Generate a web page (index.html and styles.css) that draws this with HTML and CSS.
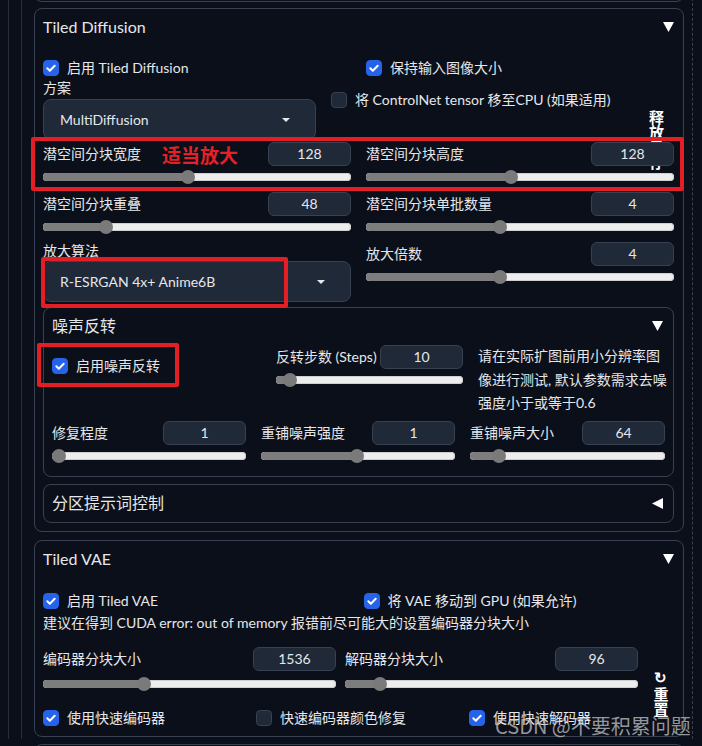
FILE: index.html
```html
<!DOCTYPE html>
<html lang="zh-CN">
<head>
<meta charset="utf-8">
<title>Tiled Diffusion</title>
<link rel="stylesheet" href="styles.css">
</head>
<body>
<div class="rail">
<div class="col">
  <div class="prev"></div>

  <section class="acc td">
    <div class="acc-head">
      <span class="acc-title">Tiled Diffusion</span>
      <svg class="tri" width="11" height="10" viewBox="0 0 11 10"><polygon points="0,0 11,0 5.5,10"/></svg>
    </div>
    <span class="vbtn vbtn-free">释放显存</span>

    <div class="row-a">
      <label class="cb"><span class="box on"><svg width="16" height="16" viewBox="0 0 16 16"><path d="M4.3 8.3l2.5 2.4 4.9-5"/></svg></span>启用 Tiled Diffusion</label>
      <label class="cb"><span class="box on"><svg width="16" height="16" viewBox="0 0 16 16"><path d="M4.3 8.3l2.5 2.4 4.9-5"/></svg></span>保持输入图像大小</label>
    </div>
    <div class="row-b">
      <div class="method">
        <div class="lbl">方案</div>
        <div class="dd"><span>MultiDiffusion</span><span class="caret"></span></div>
      </div>
      <label class="cb cb-cn"><span class="box"></span>将 ControlNet tensor 移至CPU (如果适用)</label>
    </div>

    <div class="grid2">
      <div class="sl">
        <div class="sl-head"><span class="lbl">潜空间分块宽度</span><span class="num">128</span></div>
        <div class="sl-rail"><div class="track"><div class="fill" style="width:calc((100% - 14px) * 0.469 + 7px)"></div><div class="thumb" style="left:calc((100% - 14px) * 0.469)"></div></div></div>
      </div>
      <div class="sl">
        <div class="sl-head"><span class="lbl">潜空间分块高度</span><span class="num">128</span></div>
        <div class="sl-rail"><div class="track"><div class="fill" style="width:calc((100% - 14px) * 0.469 + 7px)"></div><div class="thumb" style="left:calc((100% - 14px) * 0.469)"></div></div></div>
      </div>
      <div class="sl">
        <div class="sl-head"><span class="lbl">潜空间分块重叠</span><span class="num">48</span></div>
        <div class="sl-rail"><div class="track"><div class="fill" style="width:calc((100% - 14px) * 0.19 + 7px)"></div><div class="thumb" style="left:calc((100% - 14px) * 0.19)"></div></div></div>
      </div>
      <div class="sl">
        <div class="sl-head"><span class="lbl">潜空间分块单批数量</span><span class="num">4</span></div>
        <div class="sl-rail"><div class="track"><div class="fill" style="width:calc((100% - 14px) * 0.432 + 7px)"></div><div class="thumb" style="left:calc((100% - 14px) * 0.432)"></div></div></div>
      </div>
      <div class="upscaler">
        <div class="lbl">放大算法</div>
        <div class="dd"><span>R-ESRGAN 4x+ Anime6B</span><span class="caret"></span></div>
      </div>
      <div class="sl">
        <div class="sl-head"><span class="lbl">放大倍数</span><span class="num">4</span></div>
        <div class="sl-rail"><div class="track"><div class="fill" style="width:calc((100% - 14px) * 0.432 + 7px)"></div><div class="thumb" style="left:calc((100% - 14px) * 0.432)"></div></div></div>
      </div>
    </div>

    <section class="sub noise">
      <div class="sub-head">
        <span class="sub-title">噪声反转</span>
        <svg class="tri sub-tri" width="11" height="10" viewBox="0 0 11 10"><polygon points="0,0 11,0 5.5,10"/></svg>
      </div>
      <div class="noise-r1">
        <div class="n-cb">
          <label class="cb"><span class="box on"><svg width="16" height="16" viewBox="0 0 16 16"><path d="M4.3 8.3l2.5 2.4 4.9-5"/></svg></span>启用噪声反转</label>
        </div>
        <div class="sl">
          <div class="sl-head"><span class="lbl">反转步数 (Steps)</span><span class="num">10</span></div>
          <div class="sl-rail"><div class="track"><div class="fill" style="width:calc((100% - 14px) * 0.04 + 7px)"></div><div class="thumb" style="left:calc((100% - 14px) * 0.04)"></div></div></div>
        </div>
        <p class="hint">请在实际扩图前用小分辨率图<br>像进行测试, 默认参数需求去噪<br>强度小于或等于0.6</p>
      </div>
      <div class="noise-r2">
        <div class="sl">
          <div class="sl-head"><span class="lbl">修复程度</span><span class="num">1</span></div>
          <div class="sl-rail"><div class="track"><div class="fill" style="width:calc((100% - 14px) * 0 + 7px)"></div><div class="thumb" style="left:calc((100% - 14px) * 0)"></div></div></div>
        </div>
        <div class="sl">
          <div class="sl-head"><span class="lbl">重铺噪声强度</span><span class="num">1</span></div>
          <div class="sl-rail"><div class="track"><div class="fill" style="width:calc((100% - 14px) * 0.494 + 7px)"></div><div class="thumb" style="left:calc((100% - 14px) * 0.494)"></div></div></div>
        </div>
        <div class="sl">
          <div class="sl-head"><span class="lbl">重铺噪声大小</span><span class="num">64</span></div>
          <div class="sl-rail"><div class="track"><div class="fill" style="width:calc((100% - 14px) * 0.122 + 7px)"></div><div class="thumb" style="left:calc((100% - 14px) * 0.122)"></div></div></div>
        </div>
      </div>
    </section>

    <section class="sub region">
      <div class="sub-head region-head">
        <span class="sub-title">分区提示词控制</span>
        <svg class="tri sub-tri" width="11" height="11" viewBox="0 0 11 11"><polygon points="11,0 11,11 0,5.5"/></svg>
      </div>
    </section>
  </section>

  <section class="acc vae">
    <div class="acc-head vae-head">
      <span class="acc-title">Tiled VAE</span>
      <svg class="tri" width="11" height="10" viewBox="0 0 11 10"><polygon points="0,0 11,0 5.5,10"/></svg>
    </div>
    <div class="vae-r1">
      <label class="cb"><span class="box on"><svg width="16" height="16" viewBox="0 0 16 16"><path d="M4.3 8.3l2.5 2.4 4.9-5"/></svg></span>启用 Tiled VAE</label>
      <label class="cb"><span class="box on"><svg width="16" height="16" viewBox="0 0 16 16"><path d="M4.3 8.3l2.5 2.4 4.9-5"/></svg></span>将 VAE 移动到 GPU (如果允许)</label>
    </div>
    <p class="vae-tip">建议在得到 CUDA error: out of memory 报错前尽可能大的设置编码器分块大小</p>
    <div class="vae-r2">
      <div class="sl sl-vae">
        <div class="sl-head"><span class="lbl">编码器分块大小</span><span class="num">1536</span></div>
        <div class="sl-rail"><div class="track"><div class="fill" style="width:calc((100% - 14px) * 0.337 + 7px)"></div><div class="thumb" style="left:calc((100% - 14px) * 0.337)"></div></div></div>
      </div>
      <div class="sl sl-vae">
        <div class="sl-head"><span class="lbl">解码器分块大小</span><span class="num">96</span></div>
        <div class="sl-rail"><div class="track"><div class="fill" style="width:calc((100% - 14px) * 0.1 + 7px)"></div><div class="thumb" style="left:calc((100% - 14px) * 0.1)"></div></div></div>
      </div>
      <div class="reset-cell"><span class="vbtn vbtn-reset">↻重置</span></div>
    </div>
    <div class="vae-r3">
      <label class="cb"><span class="box on"><svg width="16" height="16" viewBox="0 0 16 16"><path d="M4.3 8.3l2.5 2.4 4.9-5"/></svg></span>使用快速编码器</label>
      <label class="cb"><span class="box"></span>快速编码器颜色修复</label>
      <label class="cb"><span class="box on"><svg width="16" height="16" viewBox="0 0 16 16"><path d="M4.3 8.3l2.5 2.4 4.9-5"/></svg></span>使用快速解码器</label>
    </div>
  </section>
  <div class="next"></div>
</div>
</div>

<div class="mark mark-1"></div>
<div class="mark mark-2"></div>
<div class="mark mark-3"></div>
<span class="mark-text">适当放大</span>
<span class="watermark">CSDN @不要积累问题</span>
</body>
</html>
```

FILE: styles.css
```css
* { box-sizing: border-box; }
html, body { margin: 0; padding: 0; }
body {
  background: #0b0f19;
  color: #e5e7eb;
  font-family: Lato, "Noto Sans CJK SC", "Noto Sans", sans-serif;
  font-size: 14px;
  line-height: 20px;
  width: 702px;
  height: 746px;
  overflow: hidden;
  position: relative;
}
p { margin: 0; }

.rail {
  margin-left: 8px;
  border-left: 1px solid #272e3b;
  padding-left: 12px;
  height: 746px;
}
.col {
  border-left: 1px solid #272e3b;
  border-right: 1px dashed #374151;
  padding-left: 12px;
  padding-right: 8px;
  width: 672px;
  height: 746px;
}
.prev {
  height: 9px;
  margin-top: -7px;
  margin-bottom: 6px;
  border: 1px solid #374151;
  border-top: none;
  border-radius: 0 0 8px 8px;
}
.next {
  height: 20px;
  margin-top: 7px;
  border: 1px solid #374151;
  border-bottom: none;
  border-radius: 8px 8px 0 0;
}

.acc {
  position: relative;
  border: 1px solid #374151;
  border-radius: 8px;
  padding: 0 9px 8px 8px;
}
.acc-head {
  height: 36px;
  display: flex;
  align-items: center;
  justify-content: space-between;
}
.acc-title { font-size: 16px; color: #e5e7eb; }
.tri { fill: #ffffff; display: block; }

.row-a {
  display: grid;
  grid-template-columns: 308px 308px;
  column-gap: 15px;
  margin-top: 13px;
}
.cb {
  display: flex;
  align-items: center;
  gap: 8px;
  height: 20px;
  white-space: nowrap;
}
.box {
  width: 16px;
  height: 16px;
  border-radius: 4px;
  background: #1f2937;
  border: 1px solid #374151;
  flex: none;
  display: block;
}
.box.on { background: #2563eb; border-color: #2563eb; }
.box svg { display: block; margin: -1px; }
.box path { fill: none; stroke: #ffffff; stroke-width: 2; stroke-linecap: round; stroke-linejoin: round; }

.row-b { display: flex; }
.method { width: 273px; padding-top: 1px; }
.lbl { line-height: 18px; color: #e5e7eb; white-space: nowrap; }
.cb-cn { margin-left: 15px; margin-top: 12px; }

.dd {
  height: 41px;
  margin-top: 2px;
  background: #1f2937;
  border: 1px solid #374151;
  border-radius: 8px;
  display: flex;
  align-items: center;
  justify-content: space-between;
  padding: 0 25px 0 16px;
  color: #e5e7eb;
}
.caret {
  width: 0; height: 0;
  border-left: 4px solid transparent;
  border-right: 4px solid transparent;
  border-top: 4px solid #e5e7eb;
}

.grid2 {
  display: grid;
  grid-template-columns: 308px 308px;
  column-gap: 15px;
  margin-top: 2px;
}
.upscaler .dd { margin-top: 1px; }

.sl { height: 50px; }
.sl-head {
  display: flex;
  justify-content: space-between;
  align-items: center;
  height: 24px;
}
.num {
  width: 83px;
  height: 24px;
  border: 1px solid #374151;
  background: #1f2937;
  border-radius: 6px;
  text-align: center;
  line-height: 22px;
  color: #e5e7eb;
}
.sl-rail {
  height: 22px;
  display: flex;
  align-items: center;
}
.track {
  position: relative;
  width: 100%;
  height: 8px;
  border-radius: 4px;
  background: #ededed;
  box-shadow: inset 0 0 0 1px #cfcfcf;
}
.fill {
  position: absolute;
  left: 0; top: 0; bottom: 0;
  background: #7d7d7d;
  border-radius: 4px 0 0 4px;
}
.thumb {
  position: absolute;
  top: 50%;
  width: 14px;
  height: 14px;
  margin-top: -7px;
  border-radius: 50%;
  background: #7a7a7a;
}

.sub {
  border: 1px solid #374151;
  border-radius: 8px;
  padding: 0 8px 5px 8px;
}
.noise { margin-top: 5px; }
.region { margin-top: 7px; padding-bottom: 0; }
.sub-head {
  height: 36px;
  display: flex;
  align-items: center;
  justify-content: space-between;
}
.region-head { height: 37px; }
.sub-title { font-size: 16px; }
.sub-tri { margin-right: 2px; }

.noise-r1 {
  display: grid;
  grid-template-columns: 209px 187px 187px;
  column-gap: 15px;
  margin-top: 1px;
}
.n-cb { padding-top: 11px; }
.hint {
  line-height: 23.5px;
  white-space: nowrap;
  margin-top: -1px;
}
.noise-r2 {
  display: grid;
  grid-template-columns: 194px 194px 195px;
  column-gap: 15px;
  margin-top: 6px;
}

.vae { margin-top: 8px; }
.vae-head { height: 37px; }
.vae-r1 {
  display: grid;
  grid-template-columns: 1fr 1fr;
  column-gap: 10px;
  margin-top: 13px;
}
.vae-tip { line-height: 22px; margin-top: 1px; white-space: nowrap; }
.vae-r2 {
  display: grid;
  grid-template-columns: 293px 293px 1fr;
  column-gap: 9px;
  margin-top: 13px;
}
.sl-vae .sl-rail { height: 26px; }
.vae-r3 {
  display: grid;
  grid-template-columns: 205px 205px 205px;
  column-gap: 8px;
  margin-top: 11px;
}
.reset-cell { display: flex; justify-content: center; align-items: flex-start; padding-top: 22px; height: 50px; }

.vbtn {
  writing-mode: vertical-rl;
  text-orientation: upright;
  font-weight: 700;
  font-size: 15px;
  line-height: 16px;
  color: #ffffff;
  letter-spacing: 0;
  white-space: nowrap;
}
.vbtn-free {
  position: absolute;
  left: 613px;
  top: 101px;
  z-index: -1;
}
.vbtn-reset { flex: none; height: 46px; font-size: 15px; }

.mark {
  position: absolute;
  border: 4px solid #e31e25;
  border-radius: 2px;
}
.mark-1 { left: 31px; top: 137px; width: 653px; height: 54px; }
.mark-2 { left: 41px; top: 257px; width: 247px; height: 51px; }
.mark-3 { left: 37px; top: 343px; width: 142px; height: 44px; }
.mark-text {
  position: absolute;
  left: 162px;
  top: 144px;
  font-family: "Noto Sans CJK SC", sans-serif;
  font-size: 19px;
  line-height: 22px;
  font-weight: 700;
  color: #e52127;
}
.watermark {
  position: absolute;
  left: 495px;
  top: 713px;
  font-family: "Noto Sans CJK SC", sans-serif;
  font-size: 20px;
  line-height: 26px;
  color: rgba(205, 205, 205, 0.72);
  white-space: nowrap;
}
```
